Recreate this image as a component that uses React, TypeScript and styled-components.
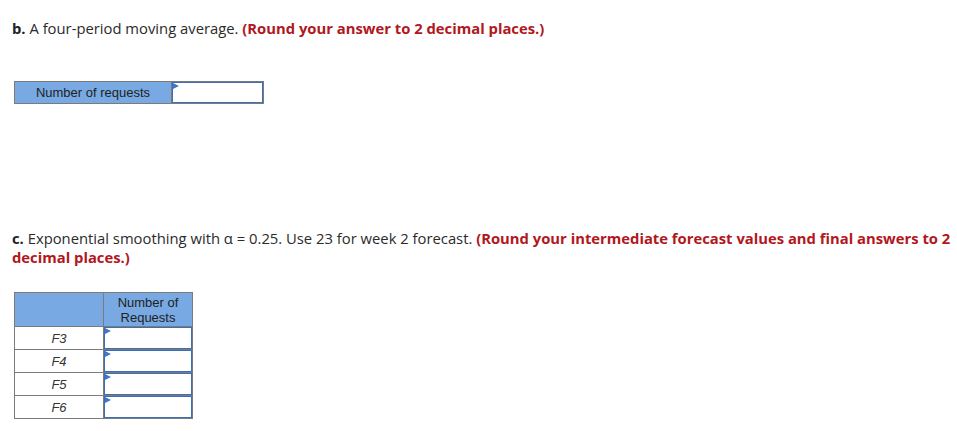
import styled, { createGlobalStyle } from "styled-components";

const GlobalStyle = createGlobalStyle`
  html, body {
    margin: 0;
    padding: 0;
    background: #ffffff;
  }
  body {
    font-family: "Open Sans", "Lato", sans-serif;
    color: #2b2b2b;
  }
`;

const Page = styled.div`
  width: 957px;
  height: 431px;
  padding: 19px 0 0 12px;
  box-sizing: border-box;
  overflow: hidden;
`;

const Prompt = styled.p<{ $top?: number }>`
  margin: ${(p) => p.$top ?? 0}px 0 0 0;
  font-size: 14.8px;
  line-height: 19px;
  width: 942px;
  & > b {
    font-weight: 700;
    color: #222;
  }
  & > strong {
    font-weight: 700;
    color: #b1171d;
  }
`;

const Grid = styled.table<{ $top: number }>`
  margin: ${(p) => p.$top}px 0 0 2px;
  border-collapse: collapse;
  font-family: "Liberation Sans", Arial, sans-serif;
  font-size: 13px;
  color: #222;
  td,
  th {
    border: 1px solid #7b7b7b;
    padding: 0;
  }
`;

const HeadCell = styled.th<{ $w: number; $h: number }>`
  width: ${(p) => p.$w}px;
  height: ${(p) => p.$h}px;
  background: #78a9e2;
  font-weight: 400;
  line-height: 15px;
  text-align: center;
  vertical-align: middle;
`;

const RowLabel = styled.td`
  width: 88px;
  height: 22px;
  text-align: center;
  font-style: italic;
  color: #333;
  background: #fff;
`;

const InputCell = styled.td`
  position: relative;
  background: #fff;
  vertical-align: top;
`;

const Entry = styled.div<{ $w: number; $h: number }>`
  width: ${(p) => p.$w}px;
  height: ${(p) => p.$h}px;
  box-sizing: border-box;
  border: 1px solid #3d6fb4;
  background: #fff;
`;

const Marker = styled.span`
  position: absolute;
  top: 1px;
  left: 1px;
  width: 0;
  height: 0;
  border-top: 3px solid transparent;
  border-bottom: 3px solid transparent;
  border-left: 6px solid #3d77c6;
`;

const rows = ["F3", "F4", "F5", "F6"];

const App = () => {
  return (
    <Page>
      <GlobalStyle />
      <Prompt>
        <b>b.</b> A four-period moving average.{" "}
        <strong>(Round your answer to 2 decimal places.)</strong>
      </Prompt>

      <Grid $top={43}>
        <tbody>
          <tr>
            <HeadCell $w={156} $h={21}>
              Number of requests
            </HeadCell>
            <InputCell>
              <Entry $w={91} $h={21} />
              <Marker />
            </InputCell>
          </tr>
        </tbody>
      </Grid>

      <Prompt $top={125}>
        <b>c.</b> Exponential smoothing with α = 0.25. Use 23 for week 2
        forecast.{" "}
        <strong>
          (Round your intermediate forecast values and final answers to 2
          decimal places.)
        </strong>
      </Prompt>

      <Grid $top={25}>
        <thead>
          <tr>
            <HeadCell $w={88} $h={33} />
            <HeadCell $w={88} $h={33}>
              Number of
              <br />
              Requests
            </HeadCell>
          </tr>
        </thead>
        <tbody>
          {rows.map((r) => (
            <tr key={r}>
              <RowLabel>{r}</RowLabel>
              <InputCell>
                <Entry $w={88} $h={22} />
                <Marker />
              </InputCell>
            </tr>
          ))}
        </tbody>
      </Grid>
    </Page>
  );
};

export default App;
